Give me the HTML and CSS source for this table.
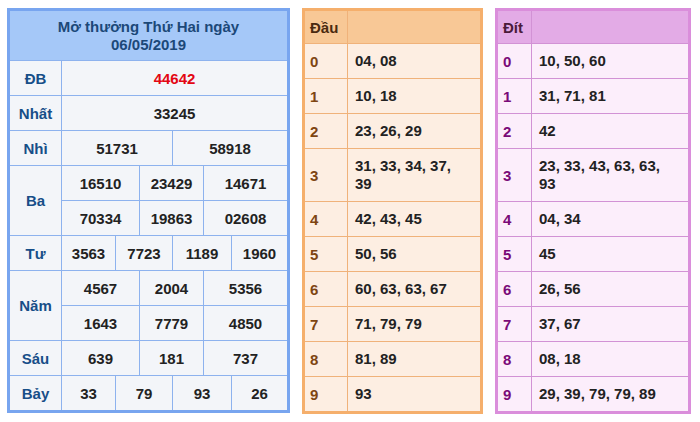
FILE: index.html
```html
<!DOCTYPE html>
<html lang="vi">
<head>
<meta charset="utf-8">
<title>Kết quả xổ số</title>
<link rel="stylesheet" href="styles.css">
</head>
<body>
<div class="wrap">
  <div class="kq">
    <div class="kq-head">Mở thưởng Thứ Hai ngày<br>06/05/2019</div>

    <div class="lbl">ĐB</div>
    <div class="val s6 red">44642</div>

    <div class="lbl">Nhất</div>
    <div class="val s6">33245</div>

    <div class="lbl">Nhì</div>
    <div class="val s3">51731</div>
    <div class="val s3">58918</div>

    <div class="lbl r2">Ba</div>
    <div class="val s2">16510</div>
    <div class="val s2">23429</div>
    <div class="val s2">14671</div>
    <div class="val s2">70334</div>
    <div class="val s2">19863</div>
    <div class="val s2">02608</div>

    <div class="lbl">Tư</div>
    <div class="val">3563</div>
    <div class="val s2">7723</div>
    <div class="val s2">1189</div>
    <div class="val">1960</div>

    <div class="lbl r2">Năm</div>
    <div class="val s2">4567</div>
    <div class="val s2">2004</div>
    <div class="val s2">5356</div>
    <div class="val s2">1643</div>
    <div class="val s2">7779</div>
    <div class="val s2">4850</div>

    <div class="lbl">Sáu</div>
    <div class="val s2">639</div>
    <div class="val s2">181</div>
    <div class="val s2">737</div>

    <div class="lbl">Bảy</div>
    <div class="val">33</div>
    <div class="val s2">79</div>
    <div class="val s2">93</div>
    <div class="val">26</div>
  </div>

  <div class="lt dau">
    <div class="lt-h">Đầu</div><div class="lt-h"></div>
    <div class="lt-k">0</div><div class="lt-v">04, 08</div>
    <div class="lt-k">1</div><div class="lt-v">10, 18</div>
    <div class="lt-k">2</div><div class="lt-v">23, 26, 29</div>
    <div class="lt-k">3</div><div class="lt-v">31, 33, 34, 37, 39</div>
    <div class="lt-k">4</div><div class="lt-v">42, 43, 45</div>
    <div class="lt-k">5</div><div class="lt-v">50, 56</div>
    <div class="lt-k">6</div><div class="lt-v">60, 63, 63, 67</div>
    <div class="lt-k">7</div><div class="lt-v">71, 79, 79</div>
    <div class="lt-k">8</div><div class="lt-v">81, 89</div>
    <div class="lt-k">9</div><div class="lt-v">93</div>
  </div>

  <div class="lt dit">
    <div class="lt-h">Đít</div><div class="lt-h"></div>
    <div class="lt-k">0</div><div class="lt-v">10, 50, 60</div>
    <div class="lt-k">1</div><div class="lt-v">31, 71, 81</div>
    <div class="lt-k">2</div><div class="lt-v">42</div>
    <div class="lt-k">3</div><div class="lt-v">23, 33, 43, 63, 63, 93</div>
    <div class="lt-k">4</div><div class="lt-v">04, 34</div>
    <div class="lt-k">5</div><div class="lt-v">45</div>
    <div class="lt-k">6</div><div class="lt-v">26, 56</div>
    <div class="lt-k">7</div><div class="lt-v">37, 67</div>
    <div class="lt-k">8</div><div class="lt-v">08, 18</div>
    <div class="lt-k">9</div><div class="lt-v">29, 39, 79, 79, 89</div>
  </div>
</div>
</body>
</html>
```

FILE: styles.css
```css
* { box-sizing: border-box; }
html, body { margin: 0; padding: 0; background: #ffffff; }
body {
  font-family: "Liberation Sans", Arial, sans-serif;
  font-weight: bold;
  font-size: 15px;
  color: #222222;
}
.wrap {
  display: flex;
  align-items: flex-start;
  gap: 12px;
  padding: 8px 7px;
}

/* left result table */
.kq {
  width: 283px;
  display: grid;
  grid-template-columns: 51px 53px 23px 32px 30px 27px 55px;
  grid-template-rows: 49px repeat(10, 34px);
  gap: 1px;
  background: #8db2ee;
  border: 3px solid #78a5ef;
}
.kq-head {
  grid-column: 1 / -1;
  background: #a5c8f8;
  color: #1c4878;
  display: flex;
  align-items: center;
  justify-content: center;
  text-align: center;
  line-height: 18px;
  padding-top: 1px;
}
.lbl, .val {
  background: #f3f5f9;
  display: flex;
  align-items: center;
  justify-content: center;
}
.lbl { color: #174e88; }
.r2 { grid-row: span 2; }
.s2 { grid-column: span 2; }
.s3 { grid-column: span 3; }
.s6 { grid-column: span 6; }
.red { color: #e30613; }

/* loto tables */
.lt {
  display: grid;
  gap: 1px;
  grid-template-rows: 32px repeat(3, 34px) 52px repeat(6, 34px);
}
.lt-h, .lt-k, .lt-v {
  display: flex;
  align-items: center;
  padding-left: 5px;
}
.lt-v { padding-left: 7px; padding-right: 14px; line-height: 18px; }

.dau {
  width: 181px;
  grid-template-columns: 42px 1fr;
  background: #f0b27a;
  border: 3px solid #f5af6c;
}
.dau .lt-h { background: #f8c896; color: #4a2a10; }
.dau .lt-k { background: #fdeee2; color: #7e4512; }
.dau .lt-v { background: #fdeee2; }

.dit {
  width: 196px;
  grid-template-columns: 33px 1fr;
  background: #d292d5;
  border: 3px solid #da8edb;
}
.dit .lt-h { background: #e3abe6; color: #4a1a3a; }
.dit .lt-k { background: #fceefb; color: #7a0a78; }
.dit .lt-v { background: #fceefb; padding-right: 28px; }
```
